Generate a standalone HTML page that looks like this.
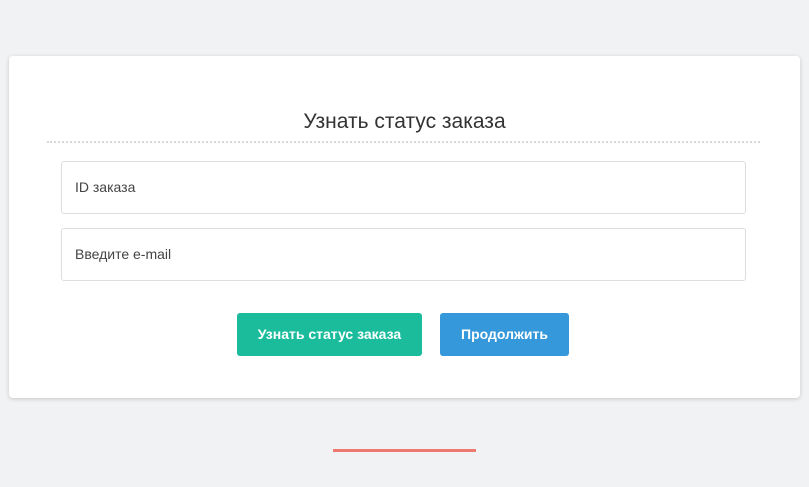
<!DOCTYPE html>
<html><head><meta charset="utf-8"><style>
body{margin:0;width:809px;height:487px;background:#f1f2f4;font-family:"Liberation Sans",sans-serif;position:relative;overflow:hidden}
.card{position:absolute;left:9px;top:56px;width:791px;height:342px;background:#fff;border-radius:4px;box-shadow:0 1px 4px rgba(0,0,0,.18)}
.title{position:absolute;left:0;right:0;top:110px;text-align:center;font-size:21px;color:#333;}
.dots{position:absolute;left:47px;width:713px;top:141px;border-top:2px dotted #d8d8d8}
.inp{position:absolute;left:61px;width:683px;height:51px;border:1px solid #dedede;border-radius:3px;background:#fff;font-size:14px;color:#444;line-height:51px;padding-left:13px;box-sizing:border-box;width:685px;height:53px}
.btn{position:absolute;top:313px;height:43px;border-radius:3px;color:#fff;font-size:14px;font-weight:bold;text-align:center;line-height:43px}
.red{position:absolute;left:333px;top:449px;width:143px;height:3px;background:#ee7a6f}
</style></head><body>
<div class="card"></div>
<div class="title">Узнать статус заказа</div>
<div class="dots"></div>
<div class="inp" style="top:161px">ID заказа</div>
<div class="inp" style="top:228px">Введите e-mail</div>
<div class="btn" style="left:237px;width:185px;background:#1abc9c">Узнать статус заказа</div>
<div class="btn" style="left:440px;width:129px;background:#3498db">Продолжить</div>
<div class="red"></div>
</body></html>
